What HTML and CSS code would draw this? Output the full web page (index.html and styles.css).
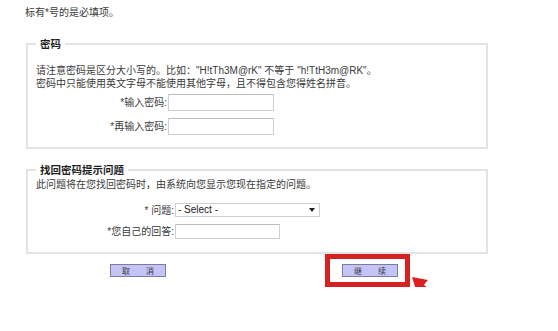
FILE: index.html
```html
<!DOCTYPE html>
<html lang="zh-CN">
<head>
    <meta charset="UTF-8">
    <title>密码设置</title>
    <link rel="stylesheet" href="styles.css">
</head>
<body>
    <div class="page">
        <p class="note">标有*号的是必填项。</p>

        <fieldset class="box-pwd">
            <legend>密码</legend>
            <p class="intro">请注意密码是区分大小写的。比如："H!tTh3M@rK" 不等于 "h!TtH3m@RK"。<br>密码中只能使用英文字母不能使用其他字母，且不得包含您得姓名拼音。</p>
            <div class="row">
                <label for="pwd1">*输入密码:</label>
                <input type="password" id="pwd1" class="txt">
            </div>
            <div class="row">
                <label for="pwd2">*再输入密码:</label>
                <input type="password" id="pwd2" class="txt">
            </div>
        </fieldset>

        <fieldset class="box-question">
            <legend>找回密码提示问题</legend>
            <p class="intro">此问题将在您找回密码时，由系统向您显示您现在指定的问题。</p>
            <div class="row">
                <label for="question">* 问题:</label>
                <span class="select-wrap">
                    <select id="question">
                        <option>- Select -</option>
                    </select>
                </span>
            </div>
            <div class="row">
                <label for="answer">*您自己的回答:</label>
                <input type="text" id="answer" class="txt">
            </div>
        </fieldset>

        <div class="actions">
            <button type="button" class="btn">取 消</button>
            <div class="highlight">
                <button type="button" class="btn">继 续</button>
            </div>
            <svg class="pointer" width="32" height="26" viewBox="0 0 32 26">
                <line x1="11" y1="11" x2="27" y2="22" stroke="#de1f1f" stroke-width="5"/>
                <polygon points="2,2 18,5 7,18" fill="#de1f1f"/>
            </svg>
        </div>
    </div>
</body>
</html>
```

FILE: styles.css
```css
body {
    margin: 0;
    font-family: "Liberation Sans", "Noto Sans CJK SC", sans-serif;
    font-size: 10px;
    color: #3a3a3a;
    background-color: #fff;
}

.page {
    padding: 6px 0 0 25px;
    width: 463px;
}

.note {
    margin: 0;
    line-height: 13px;
}

fieldset {
    box-sizing: border-box;
    width: 462px;
    margin: 17px 0 0 1px;
    padding: 0 8px 12px 8px;
    border: 2px solid #e3e3e3;
}

legend {
    padding: 0 4px;
    font-size: 10.5px;
    font-weight: bold;
    line-height: 16px;
    color: #1e1e1e;
}

.intro {
    margin: 12px 0 4px 0;
    line-height: 13px;
}

.row {
    display: grid;
    grid-template-columns: 132px auto;
    align-items: center;
    line-height: 13px;
    margin-bottom: 7px;
}

.row:last-child {
    margin-bottom: 0;
}

.row label {
    text-align: right;
    padding-right: 1px;
}

.txt {
    box-sizing: border-box;
    width: 106px;
    height: 17px;
    margin: 0;
    border: 1px solid #d0d0d0;
    border-top-color: #bcbcbc;
    padding: 0 2px;
}

/* second box: narrower label column, smaller controls */
.box-question {
    margin-top: 13px;
    padding-bottom: 13px;
}

.box-question .intro {
    margin: 0 0 12px 0;
}

.box-question .row {
    grid-template-columns: 139px auto;
}

.box-question .txt {
    width: 105px;
    height: 15px;
}

.select-wrap {
    position: relative;
    display: block;
    width: 145px;
    height: 14px;
}

.select-wrap select {
    appearance: none;
    box-sizing: border-box;
    display: block;
    width: 145px;
    height: 14px;
    margin: 0;
    padding: 0 2px;
    border: 1px solid #d0d0d0;
    background: #fff;
    font-family: "Liberation Sans", Arial, sans-serif;
    font-size: 10px;
    line-height: 12px;
    color: #222;
}

.select-wrap::after {
    content: "";
    position: absolute;
    right: 5px;
    top: 5px;
    border-left: 3px solid transparent;
    border-right: 3px solid transparent;
    border-top: 4px solid #222;
}

.actions {
    position: relative;
    display: flex;
    align-items: center;
    padding-left: 85px;
}

.btn {
    box-sizing: border-box;
    display: block;
    width: 56px;
    height: 13px;
    padding: 0;
    border: 1px solid #7c7c9c;
    background-color: #c4c4f6;
    font-family: "Noto Sans CJK SC", sans-serif;
    font-size: 8px;
    line-height: 11px;
    letter-spacing: 7px;
    text-indent: 7px;
    color: #333;
}

.highlight {
    margin-left: 159px;
    padding: 5px 7px 5px 12px;
    border: 5px solid #d42222;
}

.pointer {
    position: absolute;
    left: 385px;
    top: 21px;
}
```
